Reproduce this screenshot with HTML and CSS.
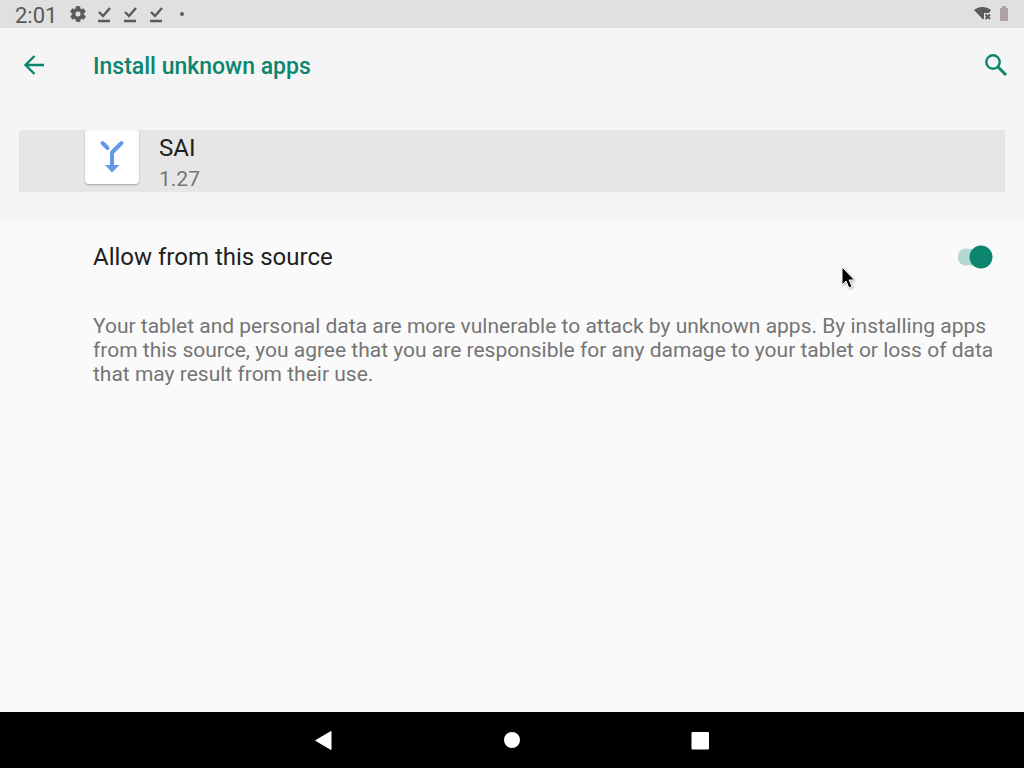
FILE: index.html
```html
<!DOCTYPE html>
<html lang="en">
<head>
<meta charset="utf-8">
<meta name="viewport" content="width=device-width, initial-scale=1">
<title>Install unknown apps</title>
<link rel="stylesheet" href="styles.css">
</head>
<body>
<div class="status-bar">
  <time class="clock">2:01</time>
  <div class="notifications">
    <svg class="glyph" viewBox="0 0 24 24" aria-hidden="true"><path fill-rule="evenodd" stroke="currentColor" d="M19.400 13a7.500 7.500 0 0 0 0-2l2.100-1.600a.5.5 0 0 0 .1-.6l-2-3.500a.5.5 0 0 0-.6-.2l-2.500 1a7.300 7.300 0 0 0-1.700-1l-.4-2.600a.5.5 0 0 0-.5-.5h-4a.5.5 0 0 0-.5.500l-.4 2.600a7.300 7.300 0 0 0-1.700 1l-2.500-1a.5.5 0 0 0-.6.2l-2 3.500a.5.5 0 0 0 .1.6L4.600 11a7.500 7.500 0 0 0 0 2l-2.100 1.600a.5.5 0 0 0-.1.6l2 3.500a.5.5 0 0 0 .6.200l2.500-1a7.300 7.300 0 0 0 1.700 1l.4 2.600a.5.5 0 0 0 .5.500h4a.5.5 0 0 0 .5-.5l.4-2.600a7.300 7.300 0 0 0 1.700-1l2.500 1a.5.5 0 0 0 .6-.2l2-3.500a.5.5 0 0 0-.1-.6zM12 16a4 4 0 1 1 0-8 4 4 0 0 1 0 8z"/></svg>
    <svg class="glyph" viewBox="0 0 18 18" aria-hidden="true"><path d="M3 16h12M4 7l4 4 7-8" fill="none" stroke="currentColor" stroke-width="2.400"/></svg>
    <svg class="glyph" viewBox="0 0 18 18" aria-hidden="true"><path d="M3 16h12M4 7l4 4 7-8" fill="none" stroke="currentColor" stroke-width="2.400"/></svg>
    <svg class="glyph" viewBox="0 0 18 18" aria-hidden="true"><path d="M3 16h12M4 7l4 4 7-8" fill="none" stroke="currentColor" stroke-width="2.400"/></svg>
    <svg class="glyph" viewBox="0 0 18 18" aria-hidden="true"><circle cx="9" cy="9" r="2"/></svg>
  </div>
  <div class="system">
    <svg class="wifi" viewBox="0 0 20 18" role="img" aria-label="Wi-Fi without internet"><path d="M1 5C6 1 13 1 18 5l-2 3h-5v5.500l-1 1z"/><path d="M12.500 9.500l4.500 4.500m0-4.500l-4.500 4.500" fill="none" stroke="currentColor" stroke-width="2"/></svg>
    <svg class="battery" viewBox="0 0 10 18" role="img" aria-label="Battery"><path fill="#aaa5a4" d="M3 1h4v2h2v13H1V3h2z"/><path fill="#c49c96" d="M5 6h2v7H5z"/></svg>
  </div>
</div>

<header class="header">
  <div class="toolbar">
    <button class="icon-button" type="button" aria-label="Back"><svg class="icon" viewBox="0 0 28 28"><path d="M24 14H6M14.500 5l-9 9 9 9" fill="none" stroke="currentColor" stroke-width="2.400"/></svg></button>
    <h1 class="title">Install unknown apps</h1>
    <button class="icon-button" type="button" aria-label="Search"><svg class="icon" viewBox="0 0 28 28"><circle cx="11" cy="11" r="6.700" fill="none" stroke="currentColor" stroke-width="2.400"/><path d="M16 16l8 8" fill="none" stroke="currentColor" stroke-width="3"/></svg></button>
  </div>
  <section class="app">
    <div class="app-icon"><svg class="app-logo" viewBox="0 0 54 54" aria-hidden="true"><g fill="none" stroke="#6299ed" stroke-width="4" stroke-linecap="round" stroke-linejoin="round"><path d="M17.500 13l5 5"/><path d="M36.500 13L27 22.500V37"/></g><path fill="#6299ed" d="M20 35h14.500L27 42.500z"/></svg></div>
    <div class="app-text">
      <h2 class="app-name">SAI</h2>
      <p class="app-version">1.27</p>
    </div>
  </section>
</header>

<main class="content">
  <label class="setting">
    <span class="setting-name">Allow from this source</span>
    <input class="switch" type="checkbox" role="switch" checked>
  </label>
  <p class="notice">Your tablet and personal data are more vulnerable to attack by unknown apps. By installing apps from this source, you agree that you are responsible for any damage to your tablet or loss of data that may result from their use.</p>
</main>

<nav class="nav-bar" aria-label="System navigation">
  <button class="nav-button" type="button" aria-label="Back"><svg class="nav-icon" viewBox="0 0 24 24"><path d="M19 3.500v18L3.700 12.500z" stroke="#fff" stroke-linejoin="round"/></svg></button>
  <button class="nav-button" type="button" aria-label="Home"><svg class="nav-icon" viewBox="0 0 24 24"><circle cx="12" cy="12" r="8"/></svg></button>
  <button class="nav-button" type="button" aria-label="Recent apps"><svg class="nav-icon" viewBox="0 0 24 24"><rect x="3.500" y="4" width="17.500" height="17.500" rx="1"/></svg></button>
</nav>

<svg class="pointer" viewBox="0 0 16 24" aria-hidden="true"><path d="M2 1v18l4-4 3 7 3-1.500-3-6.500h5.500z" stroke="#fff" stroke-width="1"/></svg>
</body>
</html>
```
FILE: styles.css
```css
* {
  box-sizing: border-box;
}

body {
  margin: 0;
  min-height: 100vh;
  display: flex;
  flex-direction: column;
  background: #fafafa;
  color: #212121;
  font-family: Roboto, "Noto Sans", sans-serif;
}

h1,
h2,
p {
  margin: 0;
  font-weight: 400;
}

button {
  padding: 0;
  border: 0;
  background: none;
  color: inherit;
}

svg {
  display: block;
  fill: currentColor;
}

.status-bar {
  display: flex;
  align-items: center;
  height: 28px;
  padding: 0 15px;
  background: #e0e0e0;
  color: #5a5a5a;
}

.clock {
  padding-top: 4px;
  font-size: 22px;
  line-height: 24px;
}

.notifications {
  display: flex;
  gap: 8px;
  margin-left: 12px;
}

.glyph {
  width: 18px;
  height: 18px;
}

.system {
  display: flex;
  gap: 6px;
  margin-left: auto;
}

.wifi {
  width: 20px;
  height: 18px;
}

.battery {
  width: 10px;
  height: 18px;
}

.header {
  padding-bottom: 28px;
  background: #f5f5f5;
}

.toolbar {
  display: flex;
  align-items: center;
  height: 74px;
  padding: 0 14px 0 20px;
  color: #0b856d;
}

.icon-button,
.icon {
  width: 28px;
  height: 28px;
}

.title {
  flex: 1;
  margin-left: 45px;
  padding-top: 4px;
  font-size: 23px;
  line-height: 28px;
  font-weight: 500;
}

.app {
  display: flex;
  gap: 20px;
  margin: 28px 19px 0;
  padding-left: 66px;
  background: #e6e6e6;
  border-radius: 4px 0 0 0;
}

.app-icon {
  width: 54px;
  height: 54px;
  border-radius: 4px;
  background: #fff;
  box-shadow: 0 1px 2px rgba(0, 0, 0, 0.3);
}

.app-name {
  font-size: 24px;
  line-height: 36px;
}

.app-version {
  color: #757575;
  font-size: 21px;
  line-height: 26px;
}

.content {
  flex: 1;
}

.setting {
  display: flex;
  align-items: center;
  justify-content: space-between;
  min-height: 73px;
  padding: 0 31px 0 93px;
}

.setting-name {
  font-size: 24px;
  line-height: 28px;
}

.switch {
  appearance: none;
  width: 35px;
  height: 24px;
  margin: 0;
  border-radius: 12px;
  background:
    radial-gradient(circle at 23px 12px, #0b856d 11px, transparent 12px),
    linear-gradient(#b3d8d0, #b3d8d0) 12px 4px / 12px 17px no-repeat,
    radial-gradient(circle at 8px 12px, #b3d8d0 8px, transparent 9px);
}

.notice {
  padding: 21px 28px 0 93px;
  color: #757575;
  font-size: 21px;
  line-height: 24px;
}

.nav-bar {
  display: grid;
  grid-template-columns: repeat(3, 188px);
  justify-content: center;
  height: 56px;
  background: #000;
  color: #fff;
}

.nav-button {
  display: grid;
  place-items: center;
}

.nav-icon {
  width: 24px;
  height: 24px;
}

.pointer {
  position: absolute;
  left: 840px;
  top: 266px;
  width: 16px;
  height: 24px;
  color: #000;
  filter: drop-shadow(1px 1px 1px rgba(0, 0, 0, 0.3));
}
```
